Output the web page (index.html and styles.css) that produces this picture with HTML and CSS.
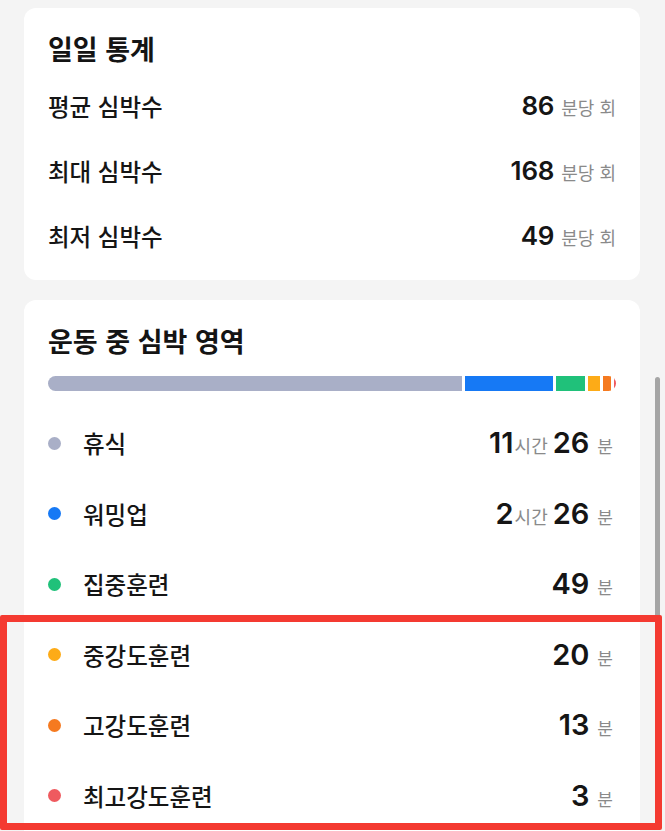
FILE: index.html
```html
<!DOCTYPE html>
<html lang="ko">
<head>
<meta charset="utf-8">
<title>심박수</title>
<link rel="stylesheet" href="styles.css">
</head>
<body>
<main class="page">
  <section class="card stats">
    <h2 class="card-title">일일 통계</h2>
    <div class="stat-list">
      <div class="stat-row">
        <span class="label">평균 심박수</span>
        <span class="value"><span class="num">86</span><span class="unit">분당 회</span></span>
      </div>
      <div class="stat-row">
        <span class="label">최대 심박수</span>
        <span class="value"><span class="num">168</span><span class="unit">분당 회</span></span>
      </div>
      <div class="stat-row">
        <span class="label">최저 심박수</span>
        <span class="value"><span class="num">49</span><span class="unit">분당 회</span></span>
      </div>
    </div>
  </section>

  <section class="card zones">
    <h2 class="card-title">운동 중 심박 영역</h2>
    <div class="zone-bar">
      <span class="seg c-rest" style="flex-grow:686"></span>
      <span class="seg c-warm" style="flex-grow:146"></span>
      <span class="seg c-focus" style="flex-grow:49"></span>
      <span class="seg c-mid" style="flex-grow:20"></span>
      <span class="seg c-high" style="flex-grow:13"></span>
      <span class="seg c-max" style="flex-grow:3"></span>
    </div>
    <ul class="zone-list">
      <li class="zone-row">
        <span class="dot c-rest"></span><span class="label">휴식</span>
        <span class="value"><span class="num znum">11</span><span class="unit hour">시간</span><span class="num znum">26</span><span class="unit zunit">분</span></span>
      </li>
      <li class="zone-row">
        <span class="dot c-warm"></span><span class="label">워밍업</span>
        <span class="value"><span class="num znum">2</span><span class="unit hour">시간</span><span class="num znum">26</span><span class="unit zunit">분</span></span>
      </li>
      <li class="zone-row">
        <span class="dot c-focus"></span><span class="label">집중훈련</span>
        <span class="value"><span class="num znum">49</span><span class="unit zunit">분</span></span>
      </li>
      <li class="zone-row">
        <span class="dot c-mid"></span><span class="label">중강도훈련</span>
        <span class="value"><span class="num znum">20</span><span class="unit zunit">분</span></span>
      </li>
      <li class="zone-row">
        <span class="dot c-high"></span><span class="label">고강도훈련</span>
        <span class="value"><span class="num znum">13</span><span class="unit zunit">분</span></span>
      </li>
      <li class="zone-row">
        <span class="dot c-max"></span><span class="label">최고강도훈련</span>
        <span class="value"><span class="num znum">3</span><span class="unit zunit">분</span></span>
      </li>
    </ul>
  </section>
</main>
<div class="scrollbar"></div>
<div class="highlight"></div>
</body>
</html>
```

FILE: styles.css
```css
html, body {
  margin: 0;
  padding: 0;
  overflow: hidden;
  height: 100%;
}

body {
  background: #f4f4f4;
  font-family: "Noto Sans CJK KR", "Noto Sans", sans-serif;
  color: #151515;
  position: relative;
}

.page {
  padding: 8px 0 0 24px;
  display: flex;
  flex-direction: column;
  gap: 20px;
}

.card {
  width: 616px;
  box-sizing: border-box;
  background: #ffffff;
  border-radius: 12px;
  padding: 24px 24px 12px;
}

.card-title {
  margin: 0;
  font-size: 27px;
  line-height: 34px;
  font-weight: 700;
  color: #141414;
}

.stat-list {
  margin-top: 7px;
  display: flex;
  flex-direction: column;
}

.stat-row {
  height: 65px;
  display: flex;
  align-items: center;
  justify-content: space-between;
}

.label {
  font-size: 23.5px;
  line-height: 30px;
  font-weight: 500;
  color: #151515;
}

.value {
  display: flex;
  align-items: baseline;
}

.num {
  font-family: "Inter", "Liberation Sans", sans-serif;
  font-weight: 600;
  font-size: 26px;
  line-height: 30px;
  color: #151515;
  letter-spacing: -0.2px;
}

.unit {
  font-size: 18px;
  font-weight: 400;
  color: #8a8a8a;
  margin-left: 7px;
}

.zones {
  padding-bottom: 40px;
}

.zone-bar {
  margin-top: 18px;
  height: 15px;
  border-radius: 8px;
  overflow: hidden;
  display: flex;
  gap: 3px;
}

.seg {
  flex-basis: 0;
  flex-shrink: 1;
  min-width: 0;
  height: 100%;
}

.zone-list {
  list-style: none;
  margin: 17px 0 0;
  padding: 0;
}

.zone-row {
  height: 70.5px;
  display: flex;
  align-items: center;
}

.zone-row .label {
  flex: 1;
}

.zone-row .value {
  padding-right: 3px;
}

.dot {
  width: 13px;
  height: 13px;
  border-radius: 50%;
  margin-right: 22px;
  flex: none;
}

.znum {
  font-size: 29px;
  letter-spacing: 0;
}

.hour {
  margin-left: 1px;
  margin-right: 5px;
  font-size: 18px;
}

.zunit {
  margin-left: 8px;
  font-size: 17px;
}

.c-rest { background: #a9afc7; }
.c-warm { background: #1679f5; }
.c-focus { background: #20c17a; }
.c-mid { background: #fdab17; }
.c-high { background: #f57a20; }
.c-max { background: #ef5a5f; }

.scrollbar {
  position: absolute;
  left: 655px;
  top: 377px;
  width: 5px;
  height: 240px;
  border-radius: 3px;
  background: #a5a5a5;
}

.highlight {
  position: absolute;
  left: 0;
  top: 615px;
  width: 662px;
  height: 215px;
  box-sizing: border-box;
  border: 7px solid #f43a31;
  border-radius: 2px;
}
```
